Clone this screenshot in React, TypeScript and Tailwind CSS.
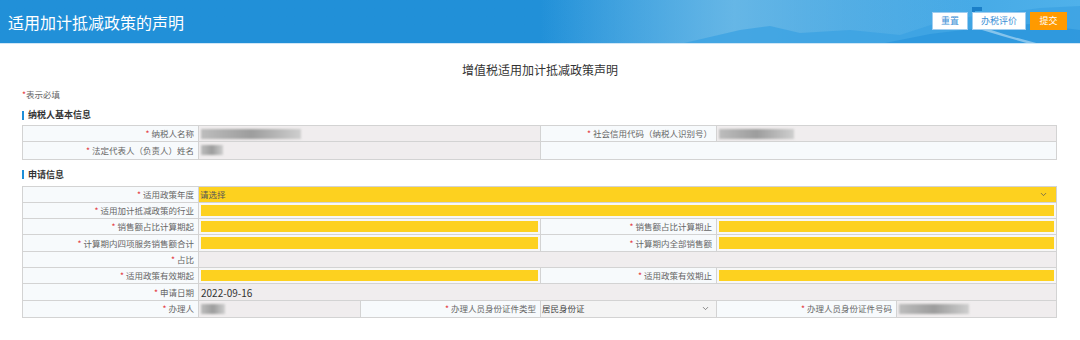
import { ChevronDown } from 'lucide-react'

const font = { fontFamily: '"Noto Sans CJK SC", "Noto Sans", sans-serif' }

function Req() {
  return <span className="mr-[2px] text-[#e4393c]">*</span>
}

function Label({ text, w, last }: { text: string; w: string; last?: boolean }) {
  return (
    <div
      className={`${w} flex shrink-0 items-center justify-end bg-[#f7fafc] pr-[4px] text-[8.5px] text-[#666] ${
        last ? '' : 'border-r border-[#d3d3d3]'
      }`}
    >
      <Req />
      {text}
    </div>
  )
}

function Blur({ w }: { w: string }) {
  return (
    <div className={`${w} ml-[2px] h-[10px] bg-gradient-to-r from-[#bdbdbd] via-[#9d9d9d] to-[#cfcfcf] blur-[1.2px]`} />
  )
}

function Gray({ w, children, last }: { w: string; children?: React.ReactNode; last?: boolean }) {
  return (
    <div
      className={`${w} flex items-center bg-[#f0edee] text-[9px] text-[#333] ${last ? '' : 'border-r border-[#d3d3d3]'}`}
    >
      {children}
    </div>
  )
}

function Yellow({ w, last }: { w: string; last?: boolean }) {
  return (
    <div className={`${w} bg-[#f7f7f7] p-[2px] ${last ? '' : 'border-r border-[#d3d3d3]'}`}>
      <div className="h-full w-full bg-[#fdd11f]" />
    </div>
  )
}

function Row({ children, last }: { children: React.ReactNode; last?: boolean }) {
  return <div className={`flex h-[16.3px] ${last ? '' : 'border-b border-[#d3d3d3]'}`}>{children}</div>
}

function Section({ title }: { title: string }) {
  return (
    <div className="flex items-center text-[9px] leading-[12px] font-bold text-[#333]">
      <span className="mr-[4px] h-[9px] w-[2px] bg-[#1e8fd8]" />
      {title}
    </div>
  )
}

function Header() {
  return (
    <div className="relative h-[44px] overflow-hidden border-b border-[#cfe6f6] bg-gradient-to-r from-[#2190d8] via-[#2190d8] to-[#4fb1ea]">
      <div className="absolute inset-0 bg-gradient-to-r from-transparent from-[50%] via-[#72bde8] via-[68%] to-transparent to-[90%] opacity-80" />
      <svg className="absolute inset-0" width="1080" height="44" viewBox="0 0 1080 44">
        <path
          d="M680 44 L740 30 L770 26 L800 33 L850 30 L900 35 L940 22 L975 16 L1010 12 L1040 8 L1080 6 L1080 44 Z"
          fill="#3ca2e2"
          opacity="0.8"
        />
        <path d="M880 44 L930 34 L980 28 L1030 24 L1080 30 L1080 44 Z" fill="#2a94dc" opacity="0.7" />
        <path d="M985 28 L1010 36 L1040 44 L1030 44 L1002 36 L982 30 Z" fill="#a9d6f2" opacity="0.7" />
        <rect x="972" y="7" width="3" height="12" fill="#1b7fc8" />
        <rect x="972" y="7" width="10" height="4" fill="#1b7fc8" />
      </svg>
      <div className="absolute left-[8px] top-[13px] text-[16px] leading-[18px] text-white">适用加计抵减政策的声明</div>
      <div className="absolute right-[13px] top-[12px] flex gap-[4px] text-[9px]">
        <button className="h-[18px] w-[36px] border border-[#9fcdf0] bg-white text-[#3b8fd6]">重置</button>
        <button className="h-[18px] w-[54px] border border-[#9fcdf0] bg-white text-[#3b8fd6]">办税评价</button>
        <button className="h-[18px] w-[37px] bg-[#ff9a00] text-white">提交</button>
      </div>
    </div>
  )
}

export default function App() {
  return (
    <div className="h-[340px] w-[1080px] bg-white" style={font}>
      <Header />
      <div className="px-[22px]">
        <div className="pt-[18px] text-center text-[12px] leading-[16px] text-[#333]">增值税适用加计抵减政策声明</div>
        <div className="mt-[10px] text-[8.5px] leading-[12px] text-[#666]">
          <span className="text-[#e4393c]">*</span>表示必填
        </div>
        <div className="mt-[9px]">
          <Section title="纳税人基本信息" />
        </div>
        <div className="mt-[4px] w-[1035px] border border-[#d3d3d3]">
          <Row>
            <Label text="纳税人名称" w="w-[176px]" />
            <Gray w="w-[342px]">
              <Blur w="w-[100px]" />
            </Gray>
            <Label text="社会信用代码（纳税人识别号）" w="w-[176px]" />
            <Gray w="flex-1" last>
              <Blur w="w-[75px]" />
            </Gray>
          </Row>
          <Row last>
            <Label text="法定代表人（负责人）姓名" w="w-[176px]" />
            <Gray w="w-[342px]">
              <Blur w="w-[22px]" />
            </Gray>
            <div className="flex-1 bg-[#f7fafc]" />
          </Row>
        </div>
        <div className="mt-[9px]">
          <Section title="申请信息" />
        </div>
        <div className="mt-[5px] w-[1035px] border border-[#d3d3d3]">
          <Row>
            <Label text="适用政策年度" w="w-[176px]" />
            <div className="flex flex-1 items-center justify-between bg-[#fdd11f] pl-[1px] pr-[8px] text-[8.5px] text-[#555]">
              请选择
              <ChevronDown size={9} strokeWidth={2} className="text-[#555]" />
            </div>
          </Row>
          <Row>
            <Label text="适用加计抵减政策的行业" w="w-[176px]" />
            <Yellow w="flex-1" last />
          </Row>
          <Row>
            <Label text="销售额占比计算期起" w="w-[176px]" />
            <Yellow w="w-[342px]" />
            <Label text="销售额占比计算期止" w="w-[176px]" />
            <Yellow w="flex-1" last />
          </Row>
          <Row>
            <Label text="计算期内四项服务销售额合计" w="w-[176px]" />
            <Yellow w="w-[342px]" />
            <Label text="计算期内全部销售额" w="w-[176px]" />
            <Yellow w="flex-1" last />
          </Row>
          <Row>
            <Label text="占比" w="w-[176px]" />
            <Gray w="flex-1" last />
          </Row>
          <Row>
            <Label text="适用政策有效期起" w="w-[176px]" />
            <Yellow w="w-[342px]" />
            <Label text="适用政策有效期止" w="w-[176px]" />
            <Yellow w="flex-1" last />
          </Row>
          <Row>
            <Label text="申请日期" w="w-[176px]" />
            <Gray w="flex-1" last>
              <span className="pl-[2px] text-[10px]">2022-09-16</span>
            </Gray>
          </Row>
          <Row last>
            <Label text="办理人" w="w-[176px]" />
            <Gray w="w-[162px]">
              <Blur w="w-[24px]" />
            </Gray>
            <Label text="办理人员身份证件类型" w="w-[180px]" />
            <div className="flex w-[176px] items-center justify-between border-r border-[#d3d3d3] bg-[#f4f4f4] pl-[1px] pr-[6px] text-[8.5px] text-[#444]">
              居民身份证
              <ChevronDown size={9} strokeWidth={2} className="text-[#666]" />
            </div>
            <Label text="办理人员身份证件号码" w="w-[180px]" />
            <Gray w="flex-1" last>
              <Blur w="w-[70px]" />
            </Gray>
          </Row>
        </div>
      </div>
    </div>
  )
}
